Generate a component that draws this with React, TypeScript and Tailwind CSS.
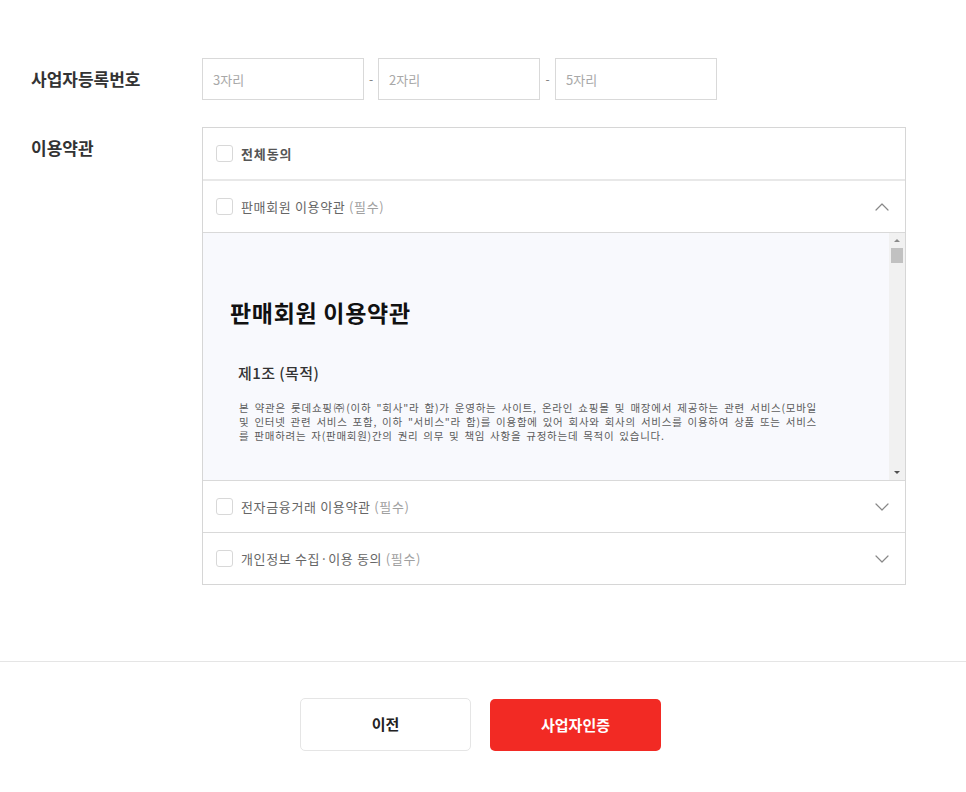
import { ChevronDown, ChevronUp } from 'lucide-react';

const fontKr = 'font-["Noto_Sans_CJK_KR","Noto_Sans",sans-serif]';

const TermRow = ({ title, open, last }: { title: string; open?: boolean; last?: boolean }) => (
  <div className={`flex items-center pl-[13px] pr-[11px] bg-white ${last ? 'h-[51px]' : 'h-[52px] border-b border-[#d9d9d9]'}`}>
    <span className="w-[17px] h-[17px] rounded-[3px] border border-[#d8d8d8] bg-white shrink-0" />
    <span className="ml-2 text-[13px] text-[#666] tracking-[0.65px]">
      {title} <span className="text-[#a0a0a0]">(필수)</span>
    </span>
    <span className="ml-auto text-[#888]">
      {open ? <ChevronUp size={24} strokeWidth={1.2} /> : <ChevronDown size={24} strokeWidth={1.2} />}
    </span>
  </div>
);

const NumberInput = ({ placeholder }: { placeholder: string }) => (
  <input
    type="text"
    placeholder={placeholder}
    className="w-[162px] h-[42px] border border-[#d9d9d9] bg-white px-[10px] text-[13px] outline-none placeholder:text-[#a8a8a8]"
  />
);

export default function App() {
  return (
    <div className={`w-[966px] h-[792px] bg-white overflow-hidden ${fontKr}`}>
      <div className="pt-[58px] pl-[31px]">
        <div className="flex">
          <div className="w-[171px] h-[42px] flex items-center text-[17px] font-bold text-[#333]">사업자등록번호</div>
          <div className="flex items-center">
            <NumberInput placeholder="3자리" />
            <span className="w-[14px] text-center text-[12px] text-[#777]">-</span>
            <NumberInput placeholder="2자리" />
            <span className="w-[15px] text-center text-[12px] text-[#777]">-</span>
            <NumberInput placeholder="5자리" />
          </div>
        </div>

        <div className="flex mt-[27px]">
          <div className="w-[171px] pt-[8px] text-[17px] leading-[26px] font-bold text-[#333]">이용약관</div>
          <div className="w-[704px] border border-[#d6d6d6]">
            <div className="h-[53px] flex items-center pl-[13px] border-b-[2px] border-[#e8e8e8]">
              <span className="w-[17px] h-[17px] rounded-[3px] border border-[#d8d8d8] bg-white" />
              <span className="ml-2 text-[13px] font-bold text-[#555] tracking-[0.9px]">전체동의</span>
            </div>
            <TermRow title="판매회원 이용약관" open />
            <div className="h-[248px] flex bg-[#f8f9fd] border-b border-[#d9d9d9] overflow-hidden">
              <div className="flex-1 pl-[27px] pt-[63px]">
                <h2 className="text-[23px] leading-[32px] font-bold text-[#111] tracking-[0.7px]">판매회원 이용약관</h2>
                <h3 className="mt-[35px] ml-[8px] text-[15px] leading-[20px] font-medium text-[#333] tracking-[0.45px]">제1조 (목적)</h3>
                <div className="mt-[18px] ml-[9px] w-[578px] whitespace-nowrap text-[10.5px] leading-[14px] text-[#5c5c5c] tracking-[0.75px] [word-spacing:1px]">
                  <p className="[text-align-last:justify]">본 약관은 롯데쇼핑㈜(이하 "회사"라 함)가 운영하는 사이트, 온라인 쇼핑몰 및 매장에서 제공하는 관련 서비스(모바일</p>
                  <p className="[text-align-last:justify]">및 인터넷 관련 서비스 포함, 이하 "서비스"라 함)를 이용함에 있어 회사와 회사의 서비스를 이용하여 상품 또는 서비스</p>
                  <p className="[word-spacing:1.8px]">를 판매하려는 자(판매회원)간의 권리 의무 및 책임 사항을 규정하는데 목적이 있습니다.</p>
                </div>
              </div>
              {/* 스크롤바 */}
              <div className="w-[16px] bg-[#f1f1f1] flex flex-col items-center justify-between">
                <div className="w-full flex flex-col items-center">
                  <svg width="8" height="14" viewBox="0 0 8 14" className="text-[#8a8a8a]">
                    <path d="M1 9 L4 6 L7 9 Z" fill="currentColor" />
                  </svg>
                  <div className="w-[12px] h-[15px] mt-[1px] bg-[#c1c1c1]" />
                </div>
                <svg width="8" height="14" viewBox="0 0 8 14" className="text-[#505050]">
                  <path d="M1 5 L7 5 L4 8 Z" fill="currentColor" />
                </svg>
              </div>
            </div>
            <TermRow title="전자금융거래 이용약관" />
            <TermRow title="개인정보 수집·이용 동의" last />
          </div>
        </div>
      </div>

      <div className="mt-[76px] border-t border-[#e5e5e5] pt-[36px] pr-[5px] flex justify-center">
        <div className="flex gap-[19px]">
          <button className="w-[171px] h-[53px] rounded-[5px] border border-[#e5e5e5] bg-white text-[15px] font-bold text-[#222]">
            이전
          </button>
          <button className="w-[171px] h-[52px] mt-[1px] rounded-[5px] bg-[#f22a24] text-[15px] font-bold text-white">
            사업자인증
          </button>
        </div>
      </div>
    </div>
  );
}
